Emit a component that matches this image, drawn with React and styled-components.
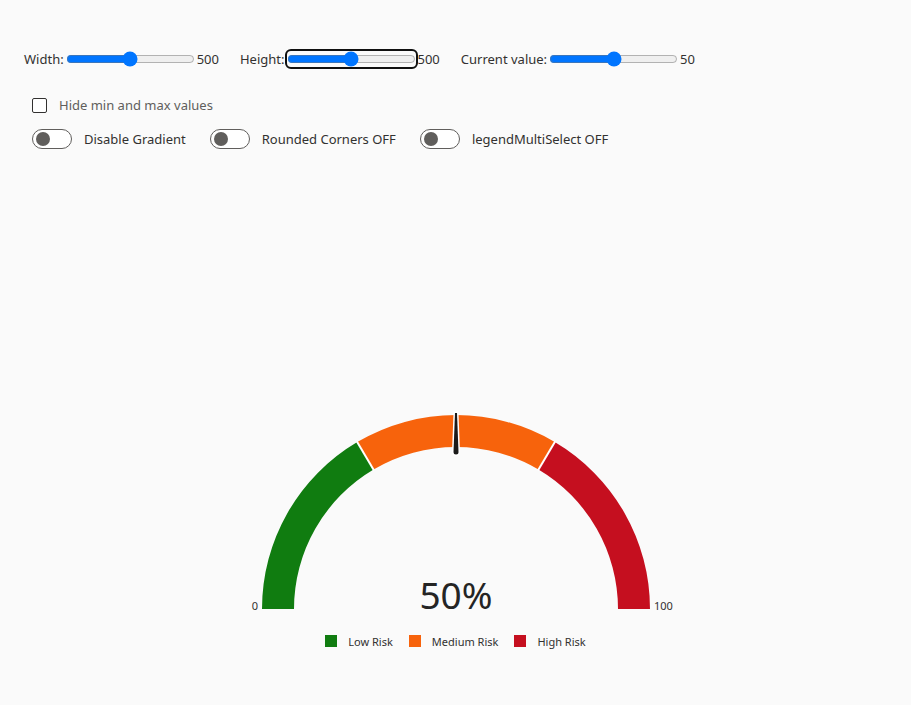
import React from "react";
import styled, { createGlobalStyle } from "styled-components";

const Global = createGlobalStyle`
  html, body { margin: 0; padding: 0; background: #fafafa; }
  body { font-family: "Noto Sans", "Open Sans", sans-serif; color: #323130; }
`;

const Page = styled.div`
  min-height: 100vh;
  background: #fafafa;
  padding: 49px 24px 0;
  box-sizing: border-box;
`;

const SliderRow = styled.div`
  display: flex;
  align-items: center;
  gap: 21px;
  height: 20px;
  font-size: 13px;
  line-height: 20px;
`;

const SliderGroup = styled.label`
  display: flex;
  align-items: center;
  white-space: nowrap;
`;

const Range = styled.input.attrs({ type: "range" })`
  width: 129px;
  height: 16px;
  margin: 2px;
  accent-color: #0075ff;
  outline: ${(p) => (p.$focused ? "2px solid #101010" : "none")};
  outline-offset: 0;
  border-radius: 4px;
`;

const CheckRow = styled.label`
  display: flex;
  align-items: center;
  gap: 12px;
  margin: 26px 0 0 8px;
  height: 20px;
  font-size: 13px;
  color: #605e5c;
`;

const Box = styled.span`
  width: 15px;
  height: 15px;
  box-sizing: border-box;
  border: 1px solid #323130;
  border-radius: 2px;
  background: #fff;
`;

const ToggleRow = styled.div`
  display: flex;
  align-items: center;
  margin: 14px 0 0 8px;
  height: 20px;
  gap: 24px;
`;

const ToggleItem = styled.label`
  display: flex;
  align-items: center;
  gap: 12px;
  font-size: 13px;
  color: #323130;
`;

const Pill = styled.span`
  position: relative;
  width: 40px;
  height: 20px;
  box-sizing: border-box;
  border: 1px solid #605e5c;
  border-radius: 10px;
  background: #fff;
`;

const Knob = styled.span`
  position: absolute;
  top: 2px;
  left: 3px;
  width: 14px;
  height: 14px;
  border-radius: 50%;
  background: #605e5c;
`;

const ChartArea = styled.div`
  display: flex;
  flex-direction: column;
  align-items: center;
  margin: 258px -24px 0;
`;

const GaugeSvg = styled.svg`
  display: block;
  overflow: visible;
`;

const Legend = styled.div`
  display: flex;
  align-items: center;
  gap: 16px;
  margin-top: 14px;
  height: 20px;
`;

const LegendItem = styled.div`
  display: flex;
  align-items: center;
  gap: 11px;
  font-size: 11px;
  color: #323130;
`;

const Swatch = styled.span`
  width: 12px;
  height: 12px;
  background: ${(p) => p.$color};
`;

const cx = 220;
const cy = 202;
const R = 194;
const r = 162;

const pt = (rad, f) => {
  const t = Math.PI * (1 - f);
  return [cx + rad * Math.cos(t), cy - rad * Math.sin(t)];
};

const arcPath = (f0, f1) => {
  const [ox0, oy0] = pt(R, f0);
  const [ox1, oy1] = pt(R, f1);
  const [ix1, iy1] = pt(r, f1);
  const [ix0, iy0] = pt(r, f0);
  return `M ${ox0} ${oy0} A ${R} ${R} 0 0 1 ${ox1} ${oy1} L ${ix1} ${iy1} A ${r} ${r} 0 0 0 ${ix0} ${iy0} Z`;
};

const segments = [
  { from: 0, to: 0.33, color: "#107c10", label: "Low Risk" },
  { from: 0.33, to: 0.67, color: "#f7630c", label: "Medium Risk" },
  { from: 0.67, to: 1, color: "#c50f1f", label: "High Risk" },
];

const value = 0.5;

function Gauge() {
  const needle = `M ${cx - 1} ${cy - 196} L ${cx + 1} ${cy - 196} L ${cx + 2.5} ${cy - 157} A 2.5 2.5 0 0 1 ${cx - 2.5} ${cy - 157} Z`;
  return (
    <GaugeSvg width="440" height="210" viewBox="0 0 440 210">
      {segments.map((s) => (
        <path key={s.label} d={arcPath(s.from, s.to)} fill={s.color} />
      ))}
      {[0.33, 0.67].map((f) => {
        const [x0, y0] = pt(r - 1, f);
        const [x1, y1] = pt(R + 1, f);
        return <line key={f} x1={x0} y1={y0} x2={x1} y2={y1} stroke="#ffffff" strokeWidth="2" />;
      })}
      <path
        d={needle}
        fill="#1b1a19"
        stroke="#ffffff"
        strokeWidth="3"
        paintOrder="stroke"
        transform={`rotate(${(value - 0.5) * 180} ${cx} ${cy})`}
      />
      <text x={cx - R - 4} y={cy + 1} textAnchor="end" fontSize="11" fill="#323130" fontFamily="Noto Sans, sans-serif">0</text>
      <text x={cx + R + 4} y={cy + 1} textAnchor="start" fontSize="11" fill="#323130" fontFamily="Noto Sans, sans-serif">100</text>
      <text x={cx} y={cy} textAnchor="middle" fontSize="37" fill="#242424" fontFamily="Noto Sans, sans-serif">50%</text>
    </GaugeSvg>
  );
}

function Slider({ label, value, max, focused }) {
  return (
    <SliderGroup>
      {label}
      <Range min="0" max={max} defaultValue={value} $focused={focused} />
      {value}
    </SliderGroup>
  );
}

function Toggle({ label }) {
  return (
    <ToggleItem>
      <Pill>
        <Knob />
      </Pill>
      {label}
    </ToggleItem>
  );
}

export default function App() {
  return (
    <>
      <Global />
      <Page>
        <SliderRow>
          <Slider label="Width:" value={500} max={1000} />
          <Slider label="Height:" value={500} max={1000} focused />
          <Slider label="Current value:" value={50} max={100} />
        </SliderRow>
        <CheckRow>
          <Box />
          Hide min and max values
        </CheckRow>
        <ToggleRow>
          <Toggle label="Disable Gradient" />
          <Toggle label="Rounded Corners OFF" />
          <Toggle label="legendMultiSelect OFF" />
        </ToggleRow>
        <ChartArea>
          <Gauge />
          <Legend>
            {segments.map((s) => (
              <LegendItem key={s.label}>
                <Swatch $color={s.color} />
                {s.label}
              </LegendItem>
            ))}
          </Legend>
        </ChartArea>
      </Page>
    </>
  );
}
